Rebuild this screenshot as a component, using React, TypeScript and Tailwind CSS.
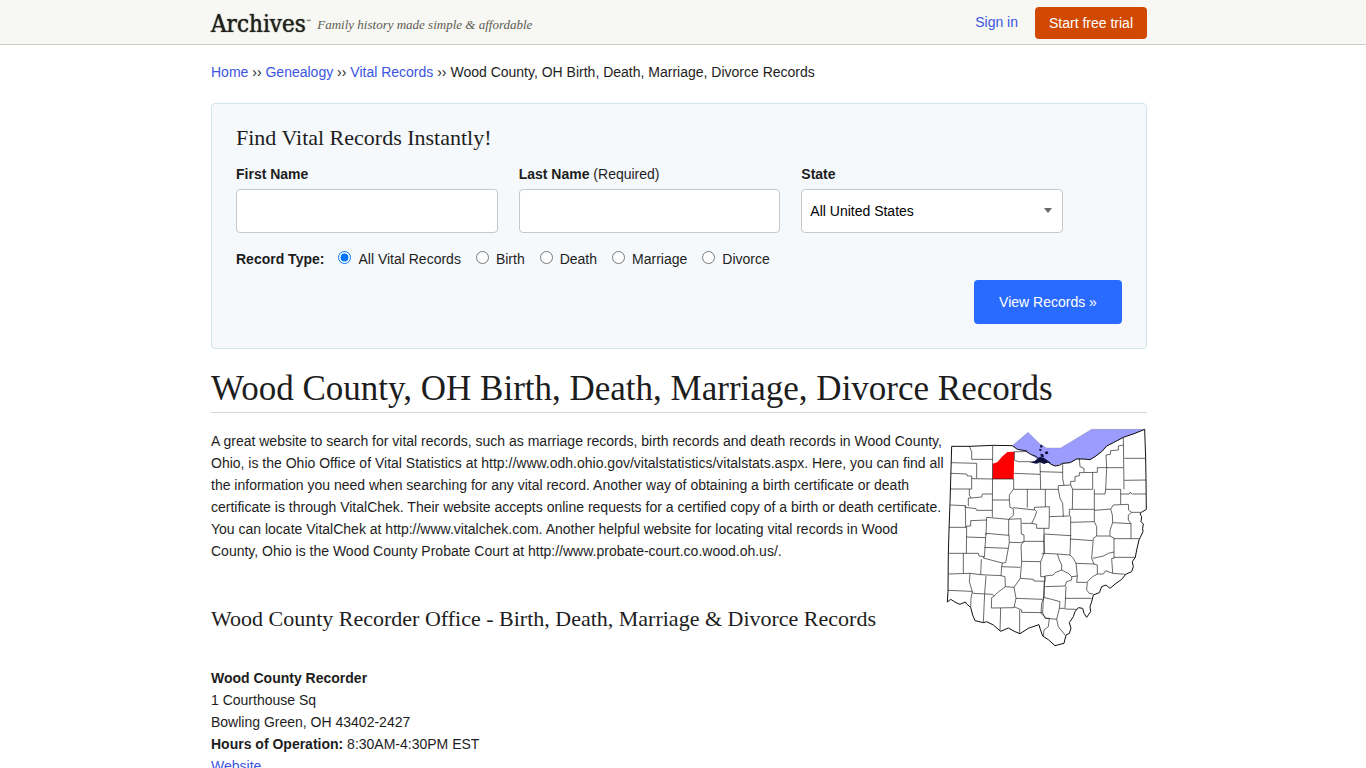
import React, { useState } from 'react';

const RECORD_TYPES = ['All Vital Records', 'Birth', 'Death', 'Marriage', 'Divorce'];

const OHIO_OUTLINE =
  'M35 79L90 79L158 76L217 77L232 88L255 92L272 103L290 110L300 122L318 122L332 132L345 138L358 136L368 130L390 128L410 117L430 117L450 119L465 110L485 95L500 78L520 68L550 52L585 40L614 28L617 115L618 180L619 268L604 277L600 282L605 290L603 305L610 312L608 325L609 335L597 360L590 390L586 412L577 425L580 440L575 455L557 463L545 478L528 490L510 505L498 495L485 500L478 518L460 525L455 545L450 560L452 575L440 592L432 580L428 565L415 563L405 575L400 590L388 608L393 625L388 640L378 645L372 670L345 677L325 659L308 648L300 625L297 614L285 618L265 625L240 641L225 635L205 624L182 634L160 615L140 605L130 608L105 602L98 585L92 562L80 552L76 546L60 553L48 548L32 538L22 546L24 513L25 400L27 330L30 250Z';

const NORTH_WEST =
  'M88 79L95 95L95 118L158 118M158 76L157 292M33 128L110 130L110 175M33 160L80 162L82 168L95 168L95 176L158 177M95 176L95 207L88 207M31 207L88 207L88 225L94 234L85 234L85 258M94 234L125 231L127 222L157 222M31 255L76 257L76 262L108 266L110 271L157 271M76 257L77 322M27 322L80 322L80 318L92 318L92 302L140 300M140 292L206 298L243 296M140 292L138 345M206 298L206 346M157 240L208 240L208 225L220 208L355 208M208 240L210 262L220 266L220 286L206 298M158 177L221 177L221 208M223 95L250 95L262 92M223 95L223 120L235 125L272 125M221 160L300 163M300 125L302 208M262 208L262 263M220 263L283 270L283 262L328 260L328 290L327 325L312 325L312 364M316 208L316 260M283 268L290 275L285 290L275 310L245 310M243 296L244 342M275 310L290 313L290 325L312 325M80 322L79 400';

const NORTH_EAST =
  'M300 155L368 157M368 130L368 176L372 196M355 208L355 197L392 195L392 184L405 184L405 170L418 167L418 158L472 157L472 143L550 143M418 115L420 140L432 145L432 157M458 157L458 208L398 208L392 195M398 208L397 268L388 268L388 285L392 290L392 347L312 342M355 208L360 235L368 250L370 290M328 290L388 288M397 268L463 268L463 208M463 222L495 222L497 208L542 208L542 253M497 208L500 143L498 105L511 103L512 92L535 90L535 78L550 75M550 52L552 208M553 115L617 115M553 181L618 180M542 222L568 222L570 217L577 222L618 222M463 271L512 267L520 255L565 253L566 270L575 277L604 277M463 268L463 305L392 307M463 305L470 320L470 348M512 267L517 285L518 308L510 330L510 348M518 308L573 311L573 356M575 277L565 285L565 300L573 311';

const SOUTH_WEST =
  'M79 351L137 353M138 340L207 346L208 367L243 368L252 364M138 340L133 412M133 382L205 385L208 367M205 385L197 428M244 342L252 345L252 364L243 375L245 425L241 475M252 364L312 364L313 398L302 425M245 424L302 425L302 470L315 470L315 484M25 400L115 400L117 408L132 410L130 414L187 429L197 428M187 429L185 440L241 442M185 440L183 467M70 400L70 460M25 462L90 460L122 464L183 467L195 470L196 500L222 502L241 475L280 478L282 483L315 484M124 418L122 464M90 460L88 485L97 515L93 535L92 562M24 511L95 514L100 520L157 523L163 528L170 520L196 500M138 467L134 520L130 608M163 528L155 533L154 564L222 563L228 535L222 502M228 535L308 538M182 564L180 633M222 560L245 570L245 577L308 578L310 538L313 484M239 570L239 640M308 578L315 595L328 595L325 620L312 630L310 648';

const SOUTH_EAST =
  'M312 345L312 400L305 402M392 345L390 405M390 357L458 362M312 400L352 402L390 405L400 415L408 430L412 468L395 470L385 460L365 450L365 435L358 420L352 402M408 430L462 432M470 348L460 355L455 415L462 432L472 435L472 462L490 462L497 452L518 460L515 415L522 415L522 354L508 348L470 348M458 415L490 408L505 400L522 396M518 460L557 463M522 356L597 356M522 412L586 412M472 462L458 470L442 485L440 510L448 520L460 522M412 468L410 487L440 487M365 450L345 458L340 465L315 468L313 500L375 498L380 485L395 480L395 470M313 500L313 530L305 550L303 580L320 595L350 598L358 565L360 545L335 538L310 532M378 498L375 565L358 565M375 535L455 535M375 567L410 568M350 598L355 620L375 645';

// County map of Ohio with Wood County filled in
const OhioMap: React.FC = () => (
  <svg
    className="float-right mt-[15px] h-[219px] w-[202px]"
    viewBox="15 24 606 657"
    role="img"
    aria-label="Map of Ohio highlighting Wood County"
  >
    <path
      d="M217 77L264 37L300 72L320 84L362 84L455 28L614 28L585 40L550 52L520 68L500 78L485 95L465 110L450 119L430 117L410 117L390 128L368 130L345 138L332 132L318 122L300 122L272 103L255 92L232 88Z"
      fill="#9c9cff"
      stroke="#77779a"
      strokeWidth="1"
    />
    <path d="M158 177L158 131L172 127L186 110L202 96L223 95L221 177Z" fill="#ff0000" />
    <g fill="none" stroke="#1c1c1c" strokeWidth="2">
      <path d={NORTH_WEST} />
      <path d={NORTH_EAST} />
      <path d={SOUTH_WEST} />
      <path d={SOUTH_EAST} />
    </g>
    <path d={OHIO_OUTLINE} fill="none" stroke="#111111" strokeWidth="3" strokeLinejoin="round" />
    <path
      d="M268 126L284 123L292 116L300 110L312 114L324 122L334 130L322 128L312 132L300 127L290 131L278 129ZM300 76L306 74L308 81L302 84ZM298 86L305 88L303 94L298 92ZM314 96L323 94L325 101L317 103ZM301 101L310 103L312 112L303 110Z"
      fill="#101040"
    />
  </svg>
);

const fieldClass = 'h-11 w-full rounded border border-[#c8c8c8] bg-white px-2 text-sm text-black';

const SearchForm: React.FC = () => {
  const [recordType, setRecordType] = useState(RECORD_TYPES[0]);

  return (
    <form
      onSubmit={(e) => e.preventDefault()}
      className="rounded border border-[#d5e3ec] bg-[#f5f9fc] px-6 pt-5 pb-6"
    >
      <h2 className="font-['Liberation_Serif',serif] text-[22px] leading-7">Find Vital Records Instantly!</h2>
      <div className="mt-3 grid max-w-[827px] grid-cols-3 gap-[21px]">
        <div>
          <label htmlFor="first-name" className="mb-1 block leading-[21px] font-bold">First Name</label>
          <input id="first-name" type="text" className={fieldClass} />
        </div>
        <div>
          <label htmlFor="last-name" className="mb-1 block leading-[21px]">
            <b>Last Name</b> (Required)
          </label>
          <input id="last-name" type="text" className={fieldClass} />
        </div>
        <div>
          <label htmlFor="state" className="mb-1 block leading-[21px] font-bold">State</label>
          <div className="relative">
            <select id="state" className={`${fieldClass} appearance-none`}>
              <option>All United States</option>
            </select>
            <svg className="pointer-events-none absolute top-[19px] right-[11px] h-[5px] w-2" viewBox="0 0 8 5">
              <path d="M0 0H8L4 5Z" fill="#666666" />
            </svg>
          </div>
        </div>
      </div>
      <fieldset className="mt-4 flex flex-wrap items-center leading-5">
        <legend className="float-left mr-[14px] font-bold">Record Type:</legend>
        {RECORD_TYPES.map((type) => (
          <label key={type} className="mr-[15px] flex items-center gap-[7px]">
            <input
              type="radio"
              name="record-type"
              checked={recordType === type}
              onChange={() => setRecordType(type)}
              className="mb-[3px] h-[13px] w-[13px]"
            />
            {type}
          </label>
        ))}
      </fieldset>
      <div className="mt-[11px] flex justify-end">
        <button type="submit" className="h-11 w-[148px] rounded bg-[#2a6bff] text-white">
          View Records »
        </button>
      </div>
    </form>
  );
};

export default function App() {
  return (
    <div className="min-h-screen bg-white pb-8 font-['Liberation_Sans',Arial,sans-serif] text-sm text-[#1d1d1d]">
      <header className="border-b border-[#cfcfc8] bg-[#f7f7f3] pr-2">
        <div className="mx-auto flex h-11 max-w-[936px] items-center">
          <a href="#" className="mt-1 flex items-start font-['DejaVu_Serif_Condensed','DejaVu_Serif',serif] text-2xl leading-8 text-[#22221c] [text-shadow:0_0_1px_#22221c]">
            Archives
            <span className="mt-2 text-[6px] leading-3">™</span>
          </a>
          <span className="mt-1.5 ml-1.5 font-['Liberation_Serif',serif] text-[13px] text-[#5c5c52] italic">
            Family history made simple &amp; affordable
          </span>
          <a href="#" className="ml-auto text-[#3b55e0]">Sign in</a>
          <button type="button" className="mt-0.5 ml-[17px] h-8 w-28 rounded bg-[#d14900] text-white">
            Start free trial
          </button>
        </div>
      </header>

      <div className="pr-2">
        <main className="mx-auto max-w-[936px]">
          <nav className="pt-[17px] pb-5 leading-[21px]">
            <a href="#" className="text-[#3b55e0]">Home</a> ››{' '}
            <a href="#" className="text-[#3b55e0]">Genealogy</a> ››{' '}
            <a href="#" className="text-[#3b55e0]">Vital Records</a> ›› Wood County, OH Birth, Death, Marriage,
            Divorce Records
          </nav>

          <SearchForm />

          <h1 className="mt-[18px] border-b border-[#d8d8d8] pb-px font-['Liberation_Serif',serif] text-[35px] leading-[44px]">
            Wood County, OH Birth, Death, Marriage, Divorce Records
          </h1>

          <OhioMap />
          <p className="pt-[17px] leading-[22px]">
            A great website to search for vital records, such as marriage records, birth records and death records in
            Wood County, Ohio, is the Ohio Office of Vital Statistics at
            http://www.odh.ohio.gov/vitalstatistics/vitalstats.aspx. Here, you can find all the information you need
            when searching for any vital record. Another way of obtaining a birth certificate or death certificate is
            through VitalChek. Their website accepts online requests for a certified copy of a birth or death
            certificate. You can locate VitalChek at http://www.vitalchek.com. Another helpful website for locating
            vital records in Wood County, Ohio is the Wood County Probate Court at
            http://www.probate-court.co.wood.oh.us/.
          </p>

          <h2 className="mt-[43px] font-['Liberation_Serif',serif] text-[22px] leading-7">
            Wood County Recorder Office - Birth, Death, Marriage &amp; Divorce Records
          </h2>

          <address className="mt-[34px] leading-[22px] not-italic">
            <b>Wood County Recorder</b>
            <br />
            1 Courthouse Sq
            <br />
            Bowling Green, OH 43402-2427
            <br />
            <b>Hours of Operation:</b> 8:30AM-4:30PM EST
            <br />
            <a href="#" className="text-[#3b55e0]">Website</a>
          </address>
        </main>
      </div>
    </div>
  );
}
